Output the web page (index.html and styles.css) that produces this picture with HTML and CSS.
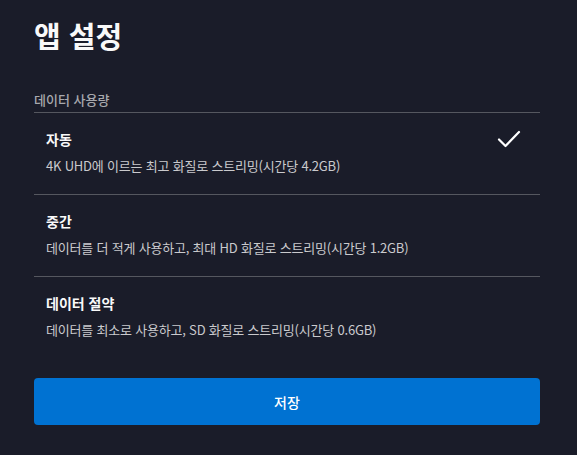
FILE: index.html
```html
<!DOCTYPE html>
<html lang="ko">
<head>
<meta charset="utf-8">
<link rel="stylesheet" href="styles.css">
</head>
<body>
<main class="page">
  <h1 class="title">앱 설정</h1>
  <section class="group">
    <h2 class="group-label">데이터 사용량</h2>
    <ul class="options">
      <li class="option">
        <div class="option-text">
          <div class="option-name">자동</div>
          <div class="option-desc">4K UHD에 이르는 최고 화질로 스트리밍(시간당 4.2GB)</div>
        </div>
        <svg class="check" width="24" height="20" viewBox="0 0 24 20"><path d="M2 10.5 L8.5 17 L22 3" fill="none" stroke="#fff" stroke-width="2.2" stroke-linecap="round" stroke-linejoin="round"/></svg>
      </li>
      <li class="option">
        <div class="option-text">
          <div class="option-name">중간</div>
          <div class="option-desc">데이터를 더 적게 사용하고, 최대 HD 화질로 스트리밍(시간당 1.2GB)</div>
        </div>
      </li>
      <li class="option">
        <div class="option-text">
          <div class="option-name">데이터 절약</div>
          <div class="option-desc">데이터를 최소로 사용하고, SD 화질로 스트리밍(시간당 0.6GB)</div>
        </div>
      </li>
    </ul>
  </section>
  <button class="save">저장</button>
</main>
</body>
</html>
```
FILE: styles.css
```css
html, body {
  margin: 0;
  padding: 0;
  background: #1a1c29;
}
body {
  font-family: "Noto Sans CJK KR", "Noto Sans", sans-serif;
  color: #f9f9f9;
}
.page {
  padding: 13px 37px 0 34px;
}
.title {
  margin: 0;
  font-size: 29px;
  line-height: 44px;
  font-weight: 700;
  color: #f9f9f9;
}
.group {
  margin-top: 34px;
}
.group-label {
  margin: 0;
  font-size: 13px;
  line-height: 18px;
  font-weight: 500;
  color: #a8a9ae;
  padding-bottom: 3px;
}
.options {
  list-style: none;
  margin: 0;
  padding: 0;
}
.option {
  display: flex;
  align-items: flex-start;
  justify-content: space-between;
  border-top: 1px solid #55575f;
  padding: 16px 19px 18px 12px;
}
.option-name {
  font-size: 14px;
  line-height: 20px;
  font-weight: 700;
  color: #f9f9f9;
}
.option-desc {
  margin-top: 7px;
  font-size: 13px;
  line-height: 20px;
  letter-spacing: -0.2px;
  color: #cacacd;
}
.save {
  display: block;
  width: 100%;
  margin-top: 20px;
  height: 47px;
  border: none;
  border-radius: 4px;
  background: #0072d2;
  color: #fff;
  font-family: inherit;
  font-size: 14px;
  font-weight: 500;
}
```
